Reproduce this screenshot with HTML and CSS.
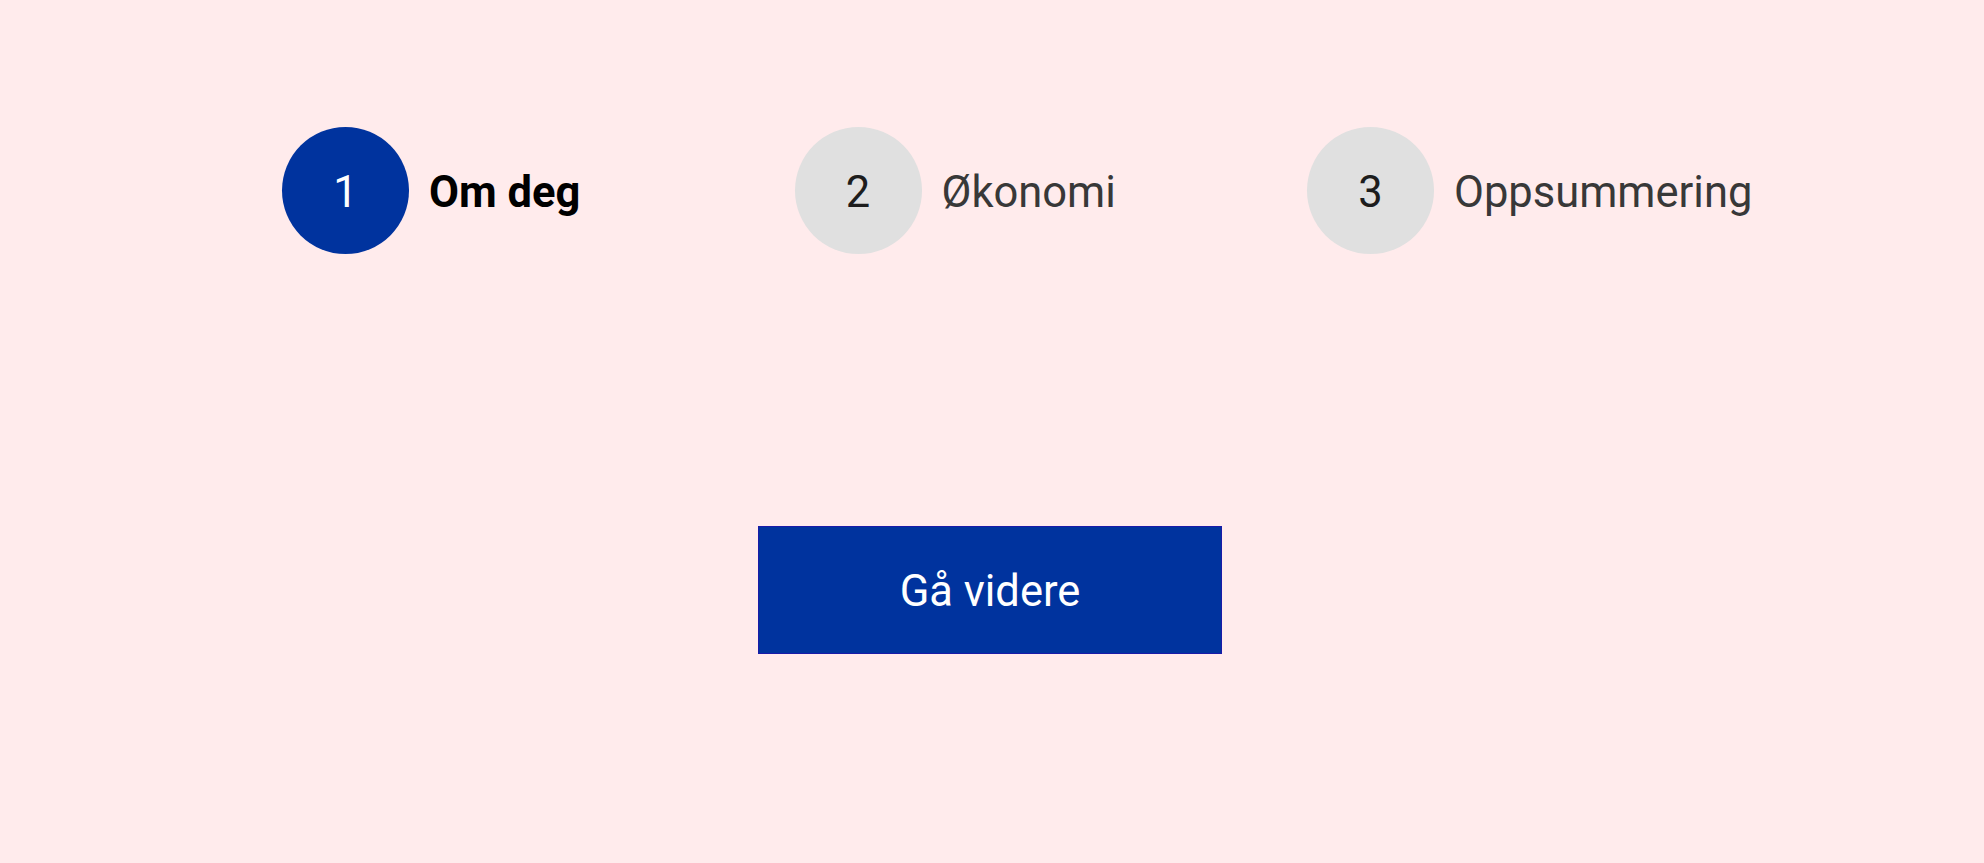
FILE: index.html
```html
<!DOCTYPE html>
<html lang="no">
<head>
<meta charset="utf-8">
<title>Steg</title>
<link rel="stylesheet" href="styles.css">
</head>
<body>
<main class="page">
  <ol class="stepper">
    <li class="step step--active"><span class="step__num">1</span><span class="step__label">Om deg</span></li>
    <li class="step"><span class="step__num">2</span><span class="step__label">Økonomi</span></li>
    <li class="step"><span class="step__num">3</span><span class="step__label">Oppsummering</span></li>
  </ol>
  <div class="actions">
    <button class="btn" type="button">Gå videre</button>
  </div>
</main>
</body>
</html>
```
FILE: styles.css
```css
html, body {
  margin: 0;
  padding: 0;
  background: #ffebec;
  font-family: Roboto, "Liberation Sans", sans-serif;
}
.page {
  width: 1984px;
  height: 863px;
  box-sizing: border-box;
  padding-top: 127px;
}
.stepper {
  list-style: none;
  margin: 0;
  padding: 0 0 0 282px;
  display: grid;
  grid-template-columns: 512.5px 512.5px 512.5px;
}
.step {
  display: flex;
  align-items: center;
  gap: 20px;
}
.step__num {
  width: 127px;
  height: 127px;
  border-radius: 50%;
  background: #e0e0e0;
  color: #1d1d1d;
  font-size: 43.5px;
  display: flex;
  align-items: center;
  justify-content: center;
  padding-top: 3px;
  box-sizing: border-box;
  flex: none;
}
.step__label {
  font-size: 43.5px;
  color: #383838;
  padding-top: 3px;
}
.step--active .step__num {
  background: #00339e;
  color: #ffffff;
}
.step--active .step__label {
  font-weight: 700;
  color: #000000;
}
.actions {
  display: flex;
  justify-content: center;
  padding-top: 272px;
  padding-right: 4px;
}
.btn {
  width: 464px;
  height: 128px;
  background: #00339e;
  border: 1px solid #1a1aa8;
  color: #ffffff;
  font-family: Roboto, "Liberation Sans", sans-serif;
  font-size: 43.5px;
  cursor: pointer;
  padding: 3px 0 0;
}
```
